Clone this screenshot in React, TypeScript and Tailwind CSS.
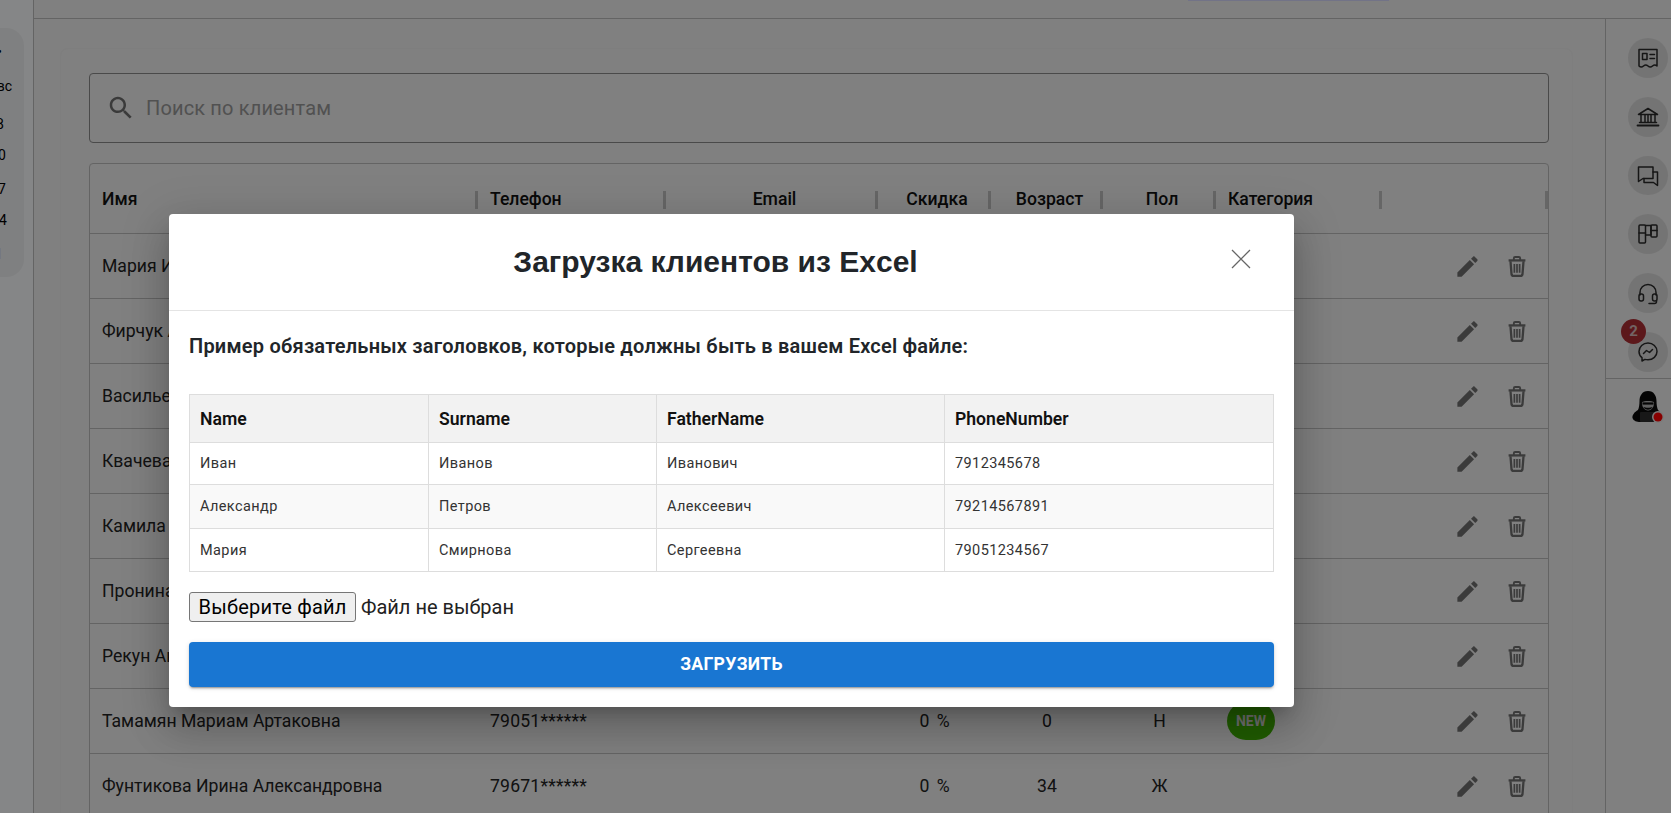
import React from "react";

const Pencil = () => (
  <svg viewBox="0 0 24 24" className="w-[27px] h-[27px] text-[#707070]" fill="currentColor">
    <path d="M3 17.25V21h3.75L17.81 9.94l-3.75-3.75L3 17.25zM20.71 7.04c.39-.39.39-1.02 0-1.41l-2.34-2.34c-.39-.39-1.02-.39-1.41 0l-1.83 1.83 3.75 3.75 1.83-1.83z" />
  </svg>
);

const Trash = () => (
  <svg viewBox="0 0 17 20" className="w-[18px] h-[21px] text-[#707070]" fill="none" stroke="currentColor" strokeWidth="1.8">
    <path d="M0.5 4.2H16.5" strokeWidth="2.2" />
    <path d="M5.5 4V2.2C5.5 1.4 6 1 6.7 1H10.3C11 1 11.5 1.4 11.5 2.2V4" strokeWidth="1.8" />
    <path d="M2.3 5L3.3 17.6C3.4 18.5 4 19 4.8 19H12.2C13 19 13.6 18.5 13.7 17.6L14.7 5" strokeWidth="2.2" />
    <path d="M6 7.5V16M8.5 7.5V16M11 7.5V16" strokeWidth="1.6" />
  </svg>
);

const RailIcon = ({ children }: { children: React.ReactNode }) => (
  <div className="w-[40px] h-[40px] rounded-full bg-[#dcdcdc] flex items-center justify-center">
    <svg viewBox="0 0 24 24" className="w-[24px] h-[24px]" fill="none" stroke="#2a2a2a" strokeWidth="1.5" strokeLinejoin="round" strokeLinecap="round">
      {children}
    </svg>
  </div>
);

const cols = "grid grid-cols-[388px_188px_212px_113px_112px_113px_166px_166px]";

const Head = ({ label, left }: { label?: string; left?: boolean }) => (
  <div className="flex items-center h-full pt-[2px]">
    <div className={left ? "flex-1 pl-3" : "flex-1 pl-2 text-center"}>{label}</div>
    <div className="w-[3px] h-[18px] bg-[#c0c0c0]" />
  </div>
);

const rows = [
  { name: "Мария Иванова" },
  { name: "Фирчук Анна" },
  { name: "Васильева Ольга" },
  { name: "Квачева Елена" },
  { name: "Камила Исаева" },
  { name: "Пронина Вера" },
  { name: "Рекун Анна" },
  { name: "Тамамян Мариам Артаковна", phone: "79051******", disc: "0 %", age: "0", sex: "Н", isNew: true },
  { name: "Фунтикова Ирина Александровна", phone: "79671******", disc: "0 %", age: "34", sex: "Ж" },
  { name: "Орлова Нина" },
];

const sample = [
  ["Иван", "Иванов", "Иванович", "7912345678", "h-[42px] bg-white"],
  ["Александр", "Петров", "Алексеевич", "79214567891", "h-[44px] bg-[#f9f9f9]"],
  ["Мария", "Смирнова", "Сергеевна", "79051234567", "h-[43px] bg-white"],
];

export default function App() {
  return (
    <div className="relative w-[1671px] h-[813px] overflow-hidden flex bg-[#f1f1f1] text-[#1a1a1a] font-['Roboto',sans-serif]">
      {/* left strip */}
      <aside className="w-[34px] shrink-0 bg-[#fbfdff] border-r border-[#bdbdbd] pt-[28px]">
        <div className="ml-[-20px] w-[44px] h-[249px] rounded-r-[18px] bg-[#f0f1f3] flex flex-col items-end text-[14px] leading-[16px] text-black">
          <div className="pr-[22px] pt-[16px] h-[40px]">•</div>
          <div className="pr-[12px] h-[37px] pt-[10px]">вс</div>
          <div className="pr-[20px] h-[32px] pt-[11px]">18</div>
          <div className="pr-[18px] h-[33px] pt-[10px]">10</div>
          <div className="pr-[18px] h-[32px] pt-[11px]">27</div>
          <div className="pr-[17px] h-[33px] pt-[10px]">14</div>
          <div className="pr-[21px] h-[32px] pt-[11px] text-[#b87a00]">11</div>
        </div>
      </aside>

      {/* centre */}
      <div className="flex-1 flex flex-col min-w-0">
        <div className="h-[19px] shrink-0 border-b border-[#bdbdbd] flex">
          <div className="ml-[1154px] w-[201px] h-[1px] bg-[#d8daff]" />
        </div>
        <div className="flex-1 flex min-h-0">
          <main className="flex-1 min-w-0 pl-[26px] pt-[29px] overflow-hidden">
            <div className="w-[1513px] h-[900px] rounded-[8px] border border-[#eeeeee] pl-[28px] pt-[24px]">
              <div className="w-[1460px] h-[70px] rounded-[4px] border border-[#8c8c8c] flex items-center pl-[16px]">
                <svg viewBox="0 0 24 24" className="w-[30px] h-[30px] text-[#6e6e6e]" fill="currentColor">
                  <path d="M15.5 14h-.79l-.28-.27C15.41 12.59 16 11.11 16 9.5 16 5.91 13.09 3 9.5 3S3 5.91 3 9.5 5.91 16 9.5 16c1.61 0 3.09-.59 4.23-1.57l.27.28v.79l5 4.99L20.49 19l-4.99-5zm-6 0C7.01 14 5 11.99 5 9.5S7.01 5 9.5 5 14 7.01 14 9.5 11.99 14 9.5 14z" />
                </svg>
                <span className="ml-[10px] text-[20px] tracking-[0.15px] text-[#9a9a9a]">Поиск по клиентам</span>
              </div>

              <div className="mt-[20px] w-[1460px] rounded-t-[4px] border border-[#bdbdbd]">
                <div className={`${cols} h-[69px] text-[17.6px] font-medium text-[#111]`}>
                  <Head label="Имя" left />
                  <Head label="Телефон" left />
                  <Head label="Email" />
                  <Head label="Скидка" />
                  <Head label="Возраст" />
                  <Head label="Пол" />
                  <Head label="Категория" left />
                  <Head />
                </div>
                {rows.map((r) => (
                  <div key={r.name} className={`${cols} h-[65px] border-t border-[#bdbdbd] items-center text-[17.6px] text-[#222]`}>
                    <div className="pl-3">{r.name}</div>
                    <div className="pl-3 tracking-[0.2px]">{r.phone}</div>
                    <div />
                    <div className="text-center [word-spacing:3px]">{r.disc}</div>
                    <div className="text-center">{r.age}</div>
                    <div className="text-center">{r.sex}</div>
                    <div className="pl-[11px]">
                      {r.isNew && (
                        <span className="flex w-[48px] h-[38px] rounded-[19px] bg-[#3fb000] items-center justify-center text-[14px] font-bold text-[#d8d8d8]">
                          NEW
                        </span>
                      )}
                    </div>
                    <div className="flex items-center pl-[72px] gap-[27px]">
                      <Pencil />
                      <Trash />
                    </div>
                  </div>
                ))}
              </div>
            </div>
          </main>

          {/* right rail */}
          <aside className="w-[66px] shrink-0 border-l border-[#bdbdbd] flex flex-col">
            <div className="relative flex flex-col gap-[19px] pl-[22px] pt-[19px] pb-[6px] h-[360px] border-b border-[#bdbdbd]">
              <RailIcon>
                <path d="M3 3.5H21V20C19.5 18.6 18 18.6 16.5 20C15 21.4 13.5 21.4 12 20C10.5 18.6 9 18.6 7.5 20C6 21.4 4.5 21.4 3 20Z" />
                <rect x="6.5" y="7.5" width="4.5" height="6" />
                <path d="M14 8.5H18.5M14 12.5H18.5" />
              </RailIcon>
              <RailIcon>
                <path d="M2.5 9.5L12 3.5L21.5 9.5Z" />
                <path d="M5 10V17M9 10V17M12 10V17M15 10V17M19 10V17" />
                <path d="M3.5 17.5H20.5" />
                <path d="M1.5 20.5H22.5" strokeWidth="1.8" />
              </RailIcon>
              <RailIcon>
                <path d="M2.5 3H17V14.5H7L2.5 17.5Z" />
                <path d="M17 8H21.5V21.5L17.5 18.5H8V14.5" />
              </RailIcon>
              <RailIcon>
                <rect x="3" y="3" width="6.5" height="18" rx="1" />
                <path d="M3 11H9.5" />
                <path d="M9.5 3.5H15V13H9.5" />
                <rect x="15" y="3" width="6" height="12" rx="1" />
                <path d="M15 8.5H21" />
              </RailIcon>
              <RailIcon>
                <path d="M4 14V11.5C4 7 7.5 3.5 12 3.5S20 7 20 11.5V14" />
                <rect x="3" y="13" width="4.5" height="7" rx="2" />
                <rect x="16.5" y="13" width="4.5" height="7" rx="2" />
                <path d="M20.5 20V20.5C20.5 21.6 19.6 22.5 18.5 22.5H13" />
              </RailIcon>
              <RailIcon>
                <path d="M12 3C7 3 3 6.8 3 11.5C3 14 4.1 16.2 6 17.7V21L8.9 19.4C9.9 19.7 10.9 19.8 12 19.8C17 19.8 21 16 21 11.5S17 3 12 3Z" />
                <path d="M7.5 13.5L10.5 10.5L13.5 12.5L16.5 9.5" />
              </RailIcon>
              <div className="absolute left-[15px] top-[300px] w-[25px] h-[25px] rounded-full bg-[#ae2e34] flex items-center justify-center text-[15px] font-bold text-[#d8bcbc]">
                2
              </div>
            </div>
            <div className="pl-[25px] pt-[11px]">
              <svg viewBox="0 0 34 34" className="w-[34px] h-[34px]">
                <path d="M17 1C11 1 8.5 6 8.5 11C8.5 14 8 18 7 20C3.5 22 1 25 1.5 28C2.5 31 6 32 9 32H24C27 32 30 31 31 28C31.5 25 29 22 27 20C26 18 25.5 14 25.5 11C25.5 6 23 1 17 1Z" fill="#0a0a0a" />
                <path d="M11 12C13 10.5 21 10.5 23 12C23.5 16 21 20.5 17 20.5C13 20.5 10.5 16 11 12Z" fill="#b8b8b8" />
                <path d="M11.5 13.5H22.5" stroke="#0a0a0a" strokeWidth="2.2" />
                <path d="M12.5 17C14 20.5 20 20.5 21.5 17C20 18 14 18 12.5 17Z" fill="#0a0a0a" />
                <rect x="9" y="22" width="16" height="10" rx="1" fill="#2e2e2e" />
                <circle cx="27" cy="27" r="6" fill="#e8e8e8" />
                <circle cx="27" cy="27" r="4.5" fill="#ff0000" />
              </svg>
            </div>
          </aside>
        </div>
      </div>

      {/* backdrop + dialog */}
      <div className="absolute inset-0 bg-black/[0.47]">
        <div className="absolute left-[169px] top-[214px] w-[1125px] bg-white rounded-[4px] shadow-[0_11px_15px_-7px_rgba(0,0,0,0.2),0_24px_38px_3px_rgba(0,0,0,0.14),0_9px_46px_8px_rgba(0,0,0,0.12)]">
          <div className="relative h-[97px] border-b border-[#e4e4e4] pl-[20px] pr-[52px] flex items-center justify-center">
            <h2 className="font-['Liberation_Sans',sans-serif] font-bold text-[30px] leading-[36px] text-[#212529]">
              Загрузка клиентов из Excel
            </h2>
            <svg viewBox="0 0 20 20" className="absolute left-[1062px] top-[35px] w-[20px] h-[20px]" fill="none" stroke="#666" strokeWidth="1.3">
              <path d="M1 1L19 19M19 1L1 19" />
            </svg>
          </div>
          <div className="pl-[20px] pr-[20px] pb-[20px] pt-[22px]">
            <p className="text-[20px] leading-[27px] tracking-[0.22px] font-semibold text-[#212529]">
              Пример обязательных заголовков, которые должны быть в вашем Excel файле:
            </p>
            <table className="mt-[34px] w-[1085px] table-fixed border-collapse text-[14.5px] tracking-[0.4px] text-[#333]">
              <colgroup>
                <col className="w-[239px]" />
                <col className="w-[228px]" />
                <col className="w-[288px]" />
                <col />
              </colgroup>
              <thead>
                <tr className="h-[48px] bg-[#f2f2f2] text-[17.6px] tracking-normal text-[#111]">
                  {["Name", "Surname", "FatherName", "PhoneNumber"].map((h) => (
                    <th key={h} className="border border-[#dddddd] px-[10px] pt-[1px] text-left font-semibold">
                      {h}
                    </th>
                  ))}
                </tr>
              </thead>
              <tbody>
                {sample.map((r) => (
                  <tr key={r[0]} className={r[4]}>
                    {r.slice(0, 4).map((c) => (
                      <td key={c} className="border border-[#dddddd] px-[10px] pt-[1px]">
                        {c}
                      </td>
                    ))}
                  </tr>
                ))}
              </tbody>
            </table>
            <div className="mt-[20px] flex items-center h-[30px] text-[20px] text-[#222]">
              <button className="w-[167px] h-[30px] bg-[#efefef] border border-[#767676] rounded-[3px] text-[20px] leading-[26px] tracking-[0.2px] text-black">
                Выберите файл
              </button>
              <span className="ml-[5px]">Файл не выбран</span>
            </div>
            <button className="mt-[20px] w-[1085px] h-[45px] rounded-[4px] bg-[#1976d2] text-white text-[17.6px] font-bold tracking-[0.3px] shadow-[0_3px_1px_-2px_rgba(0,0,0,0.2),0_2px_2px_0_rgba(0,0,0,0.14),0_1px_5px_0_rgba(0,0,0,0.12)]">
              ЗАГРУЗИТЬ
            </button>
          </div>
        </div>
      </div>
    </div>
  );
}
